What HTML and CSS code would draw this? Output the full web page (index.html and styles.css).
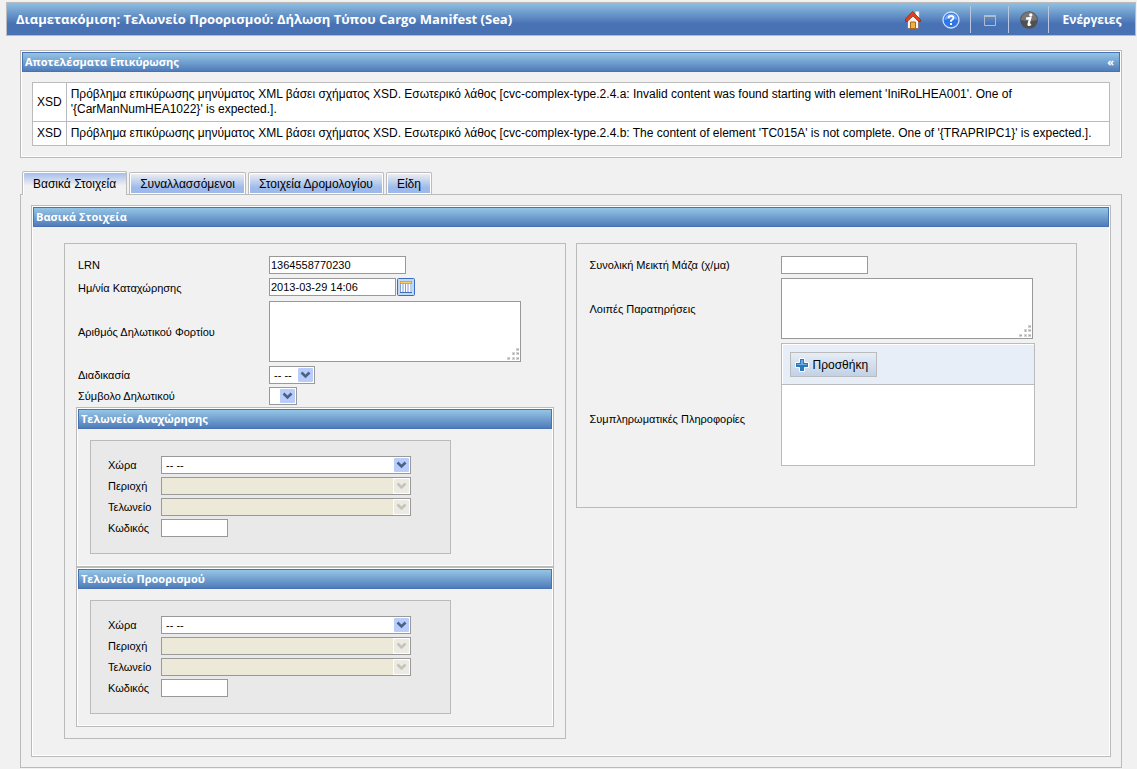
FILE: index.html
```html
<!DOCTYPE html>
<html lang="el">
<head>
<meta charset="utf-8">
<title>Διαμετακόμιση</title>
<link rel="stylesheet" href="styles.css">
</head>
<body>
<header class="topbar">
  <h1 class="topbar-title">Διαμετακόμιση: Τελωνείο Προορισμού: Δήλωση Τύπου Cargo Manifest (Sea)</h1>
  <nav class="tools" aria-label="Εργαλεία">
    <button class="tool" type="button" aria-label="Αρχική">
      <svg width="18" height="20" viewBox="0 0 18 20"><path d="M11.500 1.500h3.500v8l-3.500-3z" fill="#fff" stroke="#c9c2c2" stroke-width=".6"/><path d="M3.500 10 9 5l5.500 5v8.500h-11z" fill="#f6f4f2" stroke="#7c6a66" stroke-width=".8"/><path d="M8.500 1.500 1.500 9v2.500h1.800L9 6l5.700 5.500h1.800V9.500z" fill="#e0401a" stroke="#8c2408" stroke-width=".7"/><path d="M6.500 12h5v6.500h-5z" fill="#f2b040" stroke="#a86818"/></svg>
    </button>
    <button class="tool" type="button" aria-label="Βοήθεια">
      <svg width="18" height="18" viewBox="0 0 18 18"><circle cx="9" cy="9" r="8" fill="#2f75ea" stroke="#cfe0fa" stroke-width="1.300"/><path d="M2.500 9a6.500 6.500 0 0 1 13 0q-6-3-13 0z" fill="#6ba4f5"/><path d="M6.500 7.200Q6.500 4.800 9 4.800t2.500 2.100Q11.500 8.300 9 9.500v1.300" fill="none" stroke="#fff" stroke-width="1.800"/><path d="M8 12h2v2H8z" fill="#fff"/></svg>
    </button>
    <button class="tool tool-sep" type="button" aria-label="Παράθυρο">
      <svg width="14" height="14" viewBox="0 0 14 14"><path d="M1.500 2.500h11v10h-11z" fill="none" stroke="#b4bccb"/><path d="M1 2h12v2H1z" fill="#b4bccb"/></svg>
    </button>
    <button class="tool tool-sep tool-info" type="button" aria-label="Πληροφορίες">
      <svg width="18" height="18" viewBox="0 0 18 18"><circle cx="9" cy="9" r="8.800" fill="#505050"/><path d="M1 9a8 8 0 0 1 16 0q-8 2-16 0z" fill="#777"/><circle cx="10.800" cy="4" r="1.700" fill="#fff"/><path d="M6 7.700 10.300 7 8.500 13.200q-.2 1.600 2.300-.2" fill="none" stroke="#fff" stroke-width="2.200"/></svg>
    </button>
    <button class="tool tool-sep tool-menu" type="button">Ενέργειες</button>
  </nav>
</header>

<main class="content">
  <section class="panel results">
    <h2 class="bar">Αποτελέσματα Επικύρωσης <button class="collapse" type="button" aria-label="Σύμπτυξη">«</button></h2>
    <table class="messages">
      <tr><td class="kind">XSD</td><td>Πρόβλημα επικύρωσης μηνύματος XML βάσει σχήματος XSD. Εσωτερικό λάθος [cvc-complex-type.2.4.a: Invalid content was found starting with element 'IniRoLHEA001'. One of '{CarManNumHEA1022}' is expected.].</td></tr>
      <tr><td class="kind">XSD</td><td>Πρόβλημα επικύρωσης μηνύματος XML βάσει σχήματος XSD. Εσωτερικό λάθος [cvc-complex-type.2.4.b: The content of element 'TC015A' is not complete. One of '{TRAPRIPC1}' is expected.].</td></tr>
    </table>
  </section>

  <div class="tabs" role="tablist">
    <button class="tab tab-active" type="button" role="tab" aria-selected="true">Βασικά Στοιχεία</button>
    <button class="tab" type="button" role="tab">Συναλλασσόμενοι</button>
    <button class="tab" type="button" role="tab">Στοιχεία Δρομολογίου</button>
    <button class="tab" type="button" role="tab">Είδη</button>
  </div>

  <form class="tab-body">
    <section class="panel">
      <h2 class="bar">Βασικά Στοιχεία</h2>
      <div class="columns">
        <div class="group">
          <div class="row"><label for="lrn">LRN</label><input class="field w-lrn" id="lrn" type="text" value="1364558770230"></div>
          <div class="row"><label for="date">Ημ/νία Καταχώρησης</label>
            <span class="date"><input class="field w-date" id="date" type="text" value="2013-03-29 14:06"><button class="calendar" type="button" aria-label="Ημερολόγιο"><svg width="18" height="18" viewBox="0 0 18 18"><rect x=".5" y=".5" width="17" height="17" rx="1" fill="#c4d8f6" stroke="#3a6cc0"/><path d="M3 3h12v12H3z" fill="#fff"/><path d="M3 3h12v3H3z" fill="#f0a010"/><path d="M4 4.500h10" stroke="#f9cf70"/><path d="M3.500 6v8M6 6v8M8.500 6v8M11 6v8M14 6v8" stroke="#7f9fd4"/><path d="M3 14.500h12" stroke="#3a6cc0"/></svg></button></span></div>
          <div class="row"><label for="cargo">Αριθμός Δηλωτικού Φορτίου</label><textarea class="field area" id="cargo"></textarea></div>
          <div class="row row-tight"><label for="proc">Διαδικασία</label><select class="field select w-proc" id="proc"><option>-- --</option></select></div>
          <div class="row row-last"><label for="symbol">Σύμβολο Δηλωτικού</label><select class="field select w-symbol" id="symbol"><option></option></select></div>

          <section class="panel office">
            <h3 class="bar">Τελωνείο Αναχώρησης</h3>
            <div class="office-box">
              <label for="c1">Χώρα</label><select class="field select" id="c1"><option>-- --</option></select>
              <label for="r1">Περιοχή</label><select class="field select" id="r1" disabled></select>
              <label for="o1">Τελωνείο</label><select class="field select" id="o1" disabled></select>
              <label for="k1">Κωδικός</label><input class="field w-code" id="k1" type="text">
            </div>
          </section>
          <section class="panel office">
            <h3 class="bar">Τελωνείο Προορισμού</h3>
            <div class="office-box">
              <label for="c2">Χώρα</label><select class="field select" id="c2"><option>-- --</option></select>
              <label for="r2">Περιοχή</label><select class="field select" id="r2" disabled></select>
              <label for="o2">Τελωνείο</label><select class="field select" id="o2" disabled></select>
              <label for="k2">Κωδικός</label><input class="field w-code" id="k2" type="text">
            </div>
          </section>
        </div>

        <div class="group group-right">
          <div class="row"><label for="mass">Συνολική Μεικτή Μάζα (χ/μα)</label><input class="field w-mass" id="mass" type="text"></div>
          <div class="row"><label for="notes">Λοιπές Παρατηρήσεις</label><textarea class="field area" id="notes"></textarea></div>
          <div class="row row-list"><span id="extra">Συμπληρωματικές Πληροφορίες</span>
            <div class="list" role="group" aria-labelledby="extra">
              <div class="list-tools"><button class="add" type="button"><svg width="14" height="14" viewBox="0 0 14 14"><path d="M4.500.5h5v4h4v5h-4v4h-5v-4h-4v-5h4z" fill="#2a78be" stroke="#fff"/><path d="M6 2h2v4h4v1H2V6h4z" fill="#6fa8dc"/></svg>Προσθήκη</button></div>
            </div>
          </div>
        </div>
      </div>
    </section>
  </form>
</main>
</body>
</html>
```
FILE: styles.css
```css
* { box-sizing: border-box; }

body {
  margin: 0;
  padding: 2px 1px 1px 6px;
  background: #f1f1f1;
  color: #000;
  font: 11px/14px "Liberation Sans", Arial, sans-serif;
}

button, input, select, textarea { font: inherit; color: inherit; margin: 0; }
button { padding: 0; border: 0; background: none; }

.topbar {
  display: flex;
  justify-content: space-between;
  height: 34px;
  padding: 3px 0 2px 9px;
  border: 1px solid #bbb;
  background: linear-gradient(#8fc0e2, #4872b4 65%);
  color: #fff;
  font: bold 12px/27px "Open Sans", sans-serif;
}
.topbar-title { margin: 0; font: inherit; font-size: 13px; }
.tools { display: flex; }
.tool { display: flex; align-items: center; justify-content: center; width: 38px; }
.tool-sep { border-left: 1px solid #b9c8e0; }
.tool-info { width: 40px; }
.tool-menu { width: 87px; }

.content { padding: 14px 14px 0 14px; }

.panel { border: 1px solid #bbb; padding: 1px; box-shadow: inset 0 0 0 1px #fff; }
.bar {
  display: flex;
  justify-content: space-between;
  height: 20px;
  margin: 0;
  padding: 0 5px 0 2px;
  border: 1px solid #4872b4;
  background: linear-gradient(#95c5e5, #4f7cba);
  color: #fff;
  font: bold 11px/18px "Open Sans", sans-serif;
}

.results { padding-bottom: 11px; }
.messages {
  width: calc(100% - 20px);
  margin: 10px 10px 0;
  border-collapse: collapse;
  background: #fff;
  font-size: 12px;
  line-height: 15px;
}
.messages td { border: 1px solid #bbb; padding: 4px; }
.messages .kind { width: 33px; }

.tabs { display: flex; align-items: flex-end; gap: 2px; margin-top: 13px; padding-left: 2px; }
.tab {
  height: 22px;
  padding: 0 10px;
  border: 1px solid #bbb;
  border-bottom: 0;
  border-radius: 2px 2px 0 0;
  background: linear-gradient(#f1f1f1, #9dbaea 70%);
  box-shadow: inset 0 0 0 1px #fff;
  font-size: 12px;
}
.tab-active {
  height: 24px;
  margin-bottom: -1px;
  background: linear-gradient(#9dbaea, #f1f1f1 60%);
  box-shadow: inset 1px 1px 0 #fff;
}

.tab-body { border: 1px solid #bbb; padding: 10px; }
.columns {
  display: grid;
  grid-template-columns: 1fr 1fr;
  align-items: start;
  gap: 10px;
  padding: 16px 32px 16px 31px;
}
.group { border: 1px solid #bbb; padding: 12px 11px 11px; }
.group-right { padding-bottom: 8px; }

.row {
  display: grid;
  grid-template-columns: 191px 1fr;
  align-items: center;
  margin: 0 0 4px 2px;
}
.row-tight { margin-bottom: 3px; }
.row-last { margin-bottom: 2px; }
.row-list { min-height: 152px; }

.field {
  height: 18px;
  padding: 0 1px;
  border: 1px solid #999;
  border-radius: 0;
  background-color: #fff;
}
.w-lrn { width: 137px; }
.w-date { width: 127px; }
.w-proc { width: 46px; }
.w-symbol { width: 28px; }
.w-code { width: 67px; }
.w-mass { width: 87px; }
.date { display: flex; gap: 1px; padding-bottom: 1px; }
.calendar { width: 18px; height: 18px; }
.calendar svg { display: block; }

.area {
  width: 252px;
  height: 61px;
  resize: none;
  background: #fff url("data:image/svg+xml,%3Csvg xmlns='http://www.w3.org/2000/svg' width='12' height='12'%3E%3Cpath d='M9 0h3v3H9zM5 4h3v3H5zM9 4h3v3H9zM0 9h3v3H0zM5 9h3v3H5zM9 9h3v3H9z' fill='%23d4d4d4'/%3E%3Cpath d='M10 1h2v1h-2zM6 5h1v2H6zM10 5h2v1h-2zM1 10h2v1H1zM6 10h1v1H6zM10 10h2v1h-2z' fill='%23aaa'/%3E%3C/svg%3E") no-repeat right 1px bottom 1px;
}

.select {
  appearance: none;
  padding: 0 18px 0 4px;
  background: #fff url("data:image/svg+xml,%3Csvg xmlns='http://www.w3.org/2000/svg' width='15' height='14'%3E%3Crect width='15' height='14' rx='1' fill='%23b8cdfb'/%3E%3Cpath d='M3.500 4.500l4 4 4-4' fill='none' stroke='%234d6185' stroke-width='2.600'/%3E%3C/svg%3E") no-repeat right 1px top 1px;
}
.select:disabled {
  opacity: 1;
  background: #ece9d8 url("data:image/svg+xml,%3Csvg xmlns='http://www.w3.org/2000/svg' width='17' height='16'%3E%3Cpath d='M0 0h17v16H0z' fill='%23fff'/%3E%3Crect x='1' y='1' width='15' height='14' rx='1' fill='%23ecebe3'/%3E%3Cpath d='M4.500 5.500l4 4 4-4' fill='none' stroke='%23c5c4bb' stroke-width='2.600'/%3E%3C/svg%3E") no-repeat right top;
}

.office { padding-bottom: 12px; }
.office-box {
  display: grid;
  grid-template-columns: 53px 250px;
  align-items: center;
  row-gap: 3px;
  max-width: 361px;
  margin: 11px 12px 0;
  padding: 15px 17px 16px;
  border: 1px solid #bbb;
  background: #e9e9e9;
}

.list { align-self: start; width: 254px; height: 123px; border: 1px solid #bbb; background: #fff; }
.list-tools {
  height: 41px;
  padding: 8px;
  border-bottom: 1px solid #bbb;
  background: #e7eef7;
  box-shadow: inset 1px 1px 0 #fff;
}
.add {
  display: flex;
  align-items: center;
  gap: 4px;
  height: 25px;
  padding: 0 8px 0 4px;
  border: 1px solid #bbb;
  background: linear-gradient(#e6edf6, #c0d2e8);
  font-size: 12px;
}
```
